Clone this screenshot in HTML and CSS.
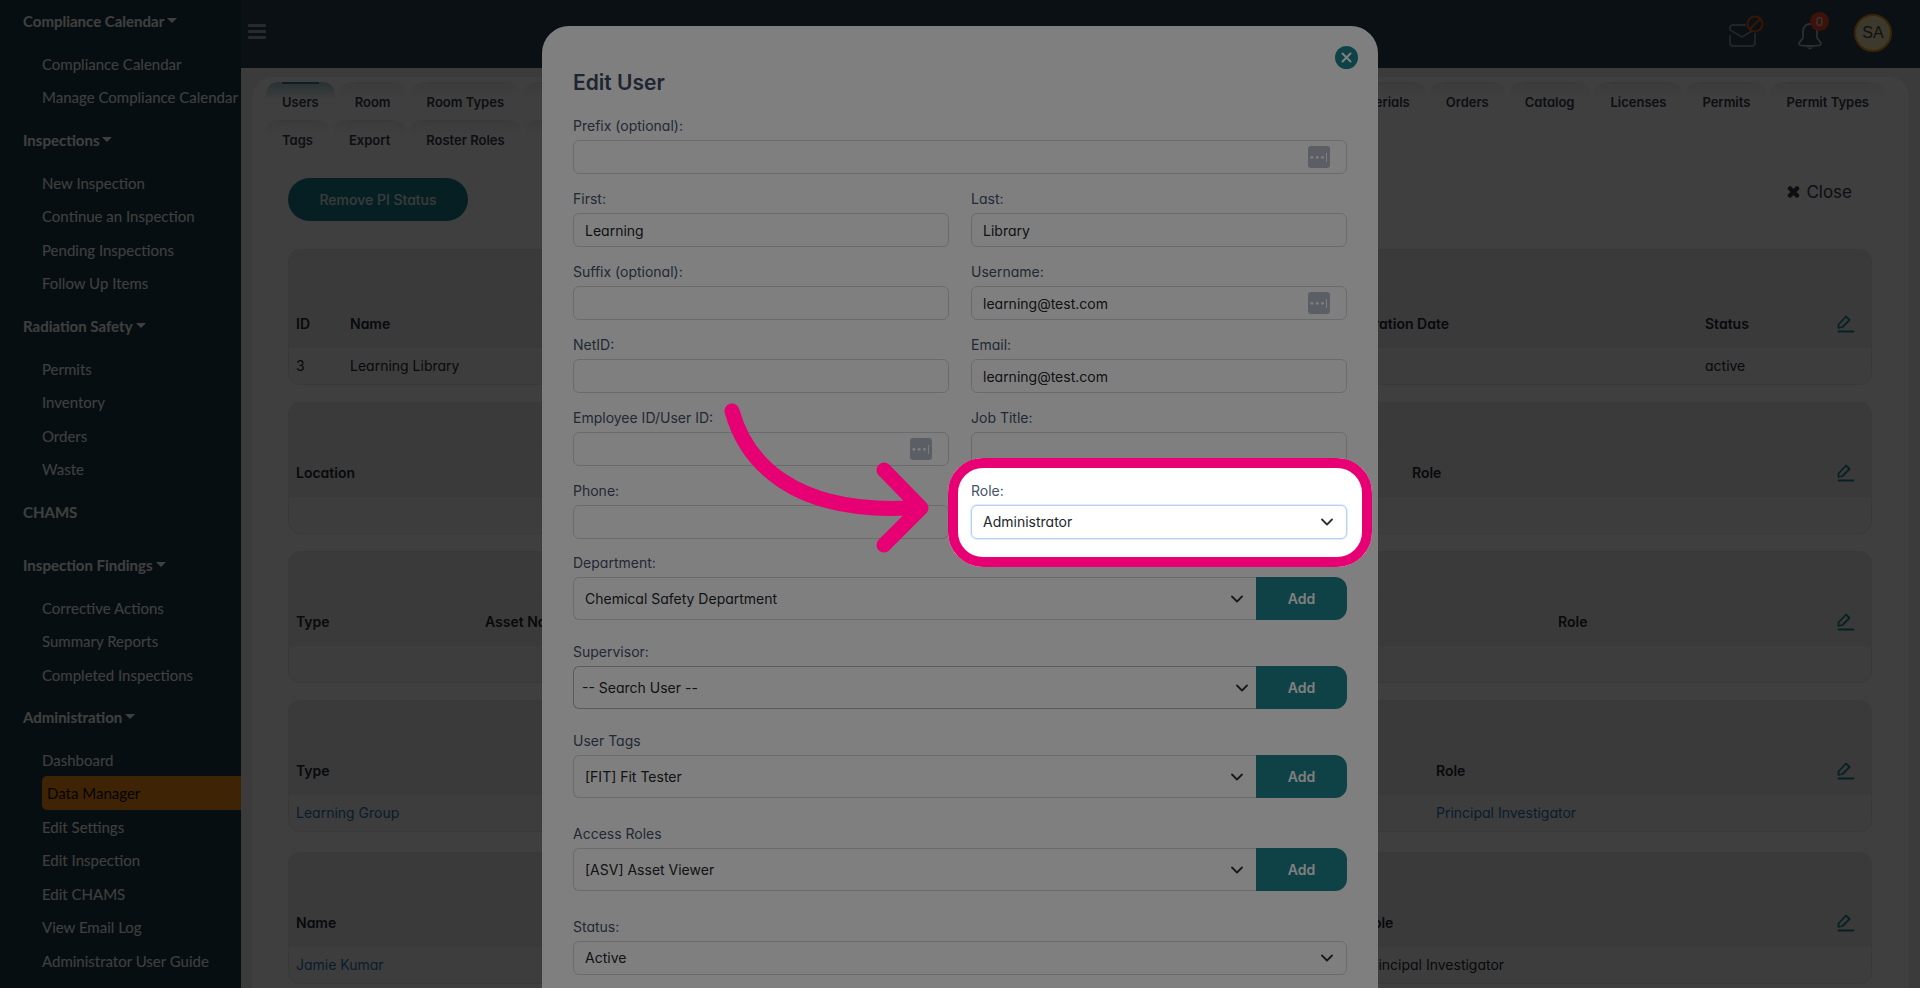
FILE: index.html
```
<!DOCTYPE html>
<html lang="en">
<head>
<meta charset="utf-8">
<meta name="viewport" content="width=device-width, initial-scale=1">
<title>Data Manager - Edit User</title>
<link rel="stylesheet" href="styles.css">
</head>
<body>
<svg class="defs" aria-hidden="true">
  <symbol id="edit" viewBox="0 0 18 18"><path d="M1.500 13V9.500L9 1.500l3.500 3.500-7 7z" fill="none" stroke="currentColor" stroke-width="1.800" stroke-linejoin="round"/><path d="M1.500 16.500h15" stroke="currentColor" stroke-width="1.800" stroke-linecap="round"/></symbol>
  <symbol id="caret" viewBox="0 0 12 8"><path d="M1 1.500l5 5 5-5" fill="none" stroke="currentColor" stroke-width="1.800" stroke-linecap="round" stroke-linejoin="round"/></symbol>
  <symbol id="filler" viewBox="0 0 22 22"><rect width="22" height="22" rx="3" fill="#b6bdc9"/><g fill="#f6f8fa"><circle cx="3.800" cy="11.300" r="1.500"/><circle cx="9.200" cy="11.300" r="1.500"/><circle cx="14.500" cy="11.300" r="1.500"/><rect x="18" y="7" width="1" height="9"/></g></symbol>
</svg>
<div class="app">
  <nav class="sidebar">
    <section class="group"><button class="group-title open">Compliance Calendar</button>
      <ul><li><a href="#">Compliance Calendar</a></li><li><a href="#">Manage Compliance Calendar</a></li></ul></section>
    <section class="group"><button class="group-title open">Inspections</button>
      <ul><li><a href="#">New Inspection</a></li><li><a href="#">Continue an Inspection</a></li><li><a href="#">Pending Inspections</a></li><li><a href="#">Follow Up Items</a></li></ul></section>
    <section class="group"><button class="group-title open">Radiation Safety</button>
      <ul><li><a href="#">Permits</a></li><li><a href="#">Inventory</a></li><li><a href="#">Orders</a></li><li><a href="#">Waste</a></li></ul></section>
    <section class="group single"><button class="group-title">CHAMS</button></section>
    <section class="group"><button class="group-title open">Inspection Findings</button>
      <ul><li><a href="#">Corrective Actions</a></li><li><a href="#">Summary Reports</a></li><li><a href="#">Completed Inspections</a></li></ul></section>
    <section class="group"><button class="group-title open">Administration</button>
      <ul><li><a href="#">Dashboard</a></li><li><a href="#" class="active">Data Manager</a></li><li><a href="#">Edit Settings</a></li><li><a href="#">Edit Inspection</a></li><li><a href="#">Edit CHAMS</a></li><li><a href="#">View Email Log</a></li><li><a href="#">Administrator User Guide</a></li></ul></section>
  </nav>
  <div class="page">
    <header class="topbar">
      <button class="burger" aria-label="Toggle menu"><i></i><i></i><i></i></button>
      <div class="tools">
        <button class="tool mail" aria-label="Mail">
          <svg width="36" height="36" viewBox="0 0 36 36" fill="none" stroke-linecap="round" stroke-linejoin="round"><g stroke="#8b96a0" stroke-width="1.800"><path d="M17 10H5a3 3 0 0 0-3 3v2l12 7 10-6"/><path d="M2 21v7a3 3 0 0 0 3 3h19a3 3 0 0 0 3-3v-9"/></g><g stroke="#d85a14" stroke-width="2"><circle cx="27" cy="9" r="7.500"/><path d="M22 14l10-10"/></g></svg>
        </button>
        <button class="tool bell" aria-label="Notifications">
          <svg width="26" height="28" viewBox="0 0 26 28" fill="none" stroke="#b4bcc4" stroke-width="1.800" stroke-linejoin="round"><path d="M13 2C8 2 6 6 6 10v5c0 3-4 4-4 7 0 2 6 2 11 2s11 0 11-2c0-3-4-4-4-7v-5c0-4-2-8-7-8z"/><path d="M9.500 25.500h7L13 27.500z" fill="#b4bcc4" stroke="none"/></svg>
          <span class="count">0</span>
        </button>
        <button class="avatar">SA</button>
      </div>
    </header>
    <main class="panel">
      <div class="tabs">
        <div class="tabrow"><a href="#" class="tab on">Users</a><a href="#" class="tab">Room</a><a href="#" class="tab">Room Types</a><span class="tab fill"></span><a href="#" class="tab">Materials</a><a href="#" class="tab">Orders</a><a href="#" class="tab">Catalog</a><a href="#" class="tab">Licenses</a><a href="#" class="tab">Permits</a><a href="#" class="tab">Permit Types</a></div>
        <div class="tabrow"><a href="#" class="tab">Tags</a><a href="#" class="tab">Export</a><a href="#" class="tab">Roster Roles</a><span class="tab short"></span></div>
      </div>
      <div class="actions">
        <button class="pill">Remove PI Status</button>
        <button class="close"><svg width="13" height="14" viewBox="0 0 13 14"><path d="M3 3.500l7 7M10 3.500l-7 7" stroke="currentColor" stroke-width="4.500" stroke-linecap="round"/></svg>Close</button>
      </div>
      <div class="box first"><table>
        <colgroup><col class="w-id"><col><col class="w-date"><col class="w-status"><col class="w-edit"></colgroup>
        <thead><tr class="cap"><td colspan="5"></td></tr><tr><th>ID</th><th>Name</th><th>Expiration Date</th><th>Status</th><th><svg class="edit"><use href="#edit"/></svg></th></tr></thead>
        <tbody><tr><td>3</td><td>Learning Library</td><td></td><td>active</td><td></td></tr></tbody></table></div>
      <div class="box"><table>
        <colgroup><col><col class="w-loc-role"><col class="w-edit"></colgroup>
        <thead><tr class="cap"><td colspan="3"></td></tr><tr><th>Location</th><th>Role</th><th><svg class="edit"><use href="#edit"/></svg></th></tr></thead>
        <tbody><tr><td></td><td></td><td></td></tr></tbody></table></div>
      <div class="box"><table>
        <colgroup><col class="w-type"><col><col class="w-asset-role"><col class="w-edit"></colgroup>
        <thead><tr class="cap"><td colspan="4"></td></tr><tr><th>Type</th><th>Asset Name</th><th>Role</th><th><svg class="edit"><use href="#edit"/></svg></th></tr></thead>
        <tbody><tr><td></td><td></td><td></td><td></td></tr></tbody></table></div>
      <div class="box wide"><table>
        <colgroup><col><col class="w-group-role"><col class="w-edit"></colgroup>
        <thead><tr class="cap"><td colspan="3"></td></tr><tr><th>Type</th><th>Role</th><th><svg class="edit"><use href="#edit"/></svg></th></tr></thead>
        <tbody><tr><td><a href="#">Learning Group</a></td><td><a href="#">Principal Investigator</a></td><td></td></tr></tbody></table></div>
      <div class="box"><table>
        <colgroup><col><col class="w-name-role"><col class="w-edit"></colgroup>
        <thead><tr class="cap"><td colspan="3"></td></tr><tr><th>Name</th><th>Role</th><th><svg class="edit"><use href="#edit"/></svg></th></tr></thead>
        <tbody><tr><td><a href="#">Jamie Kumar</a></td><td>Principal Investigator</td><td></td></tr></tbody></table></div>
    </main>
  </div>
</div>

<div class="backdrop">
  <form class="modal" role="dialog" aria-labelledby="title">
    <button type="button" class="dismiss" aria-label="Close dialog"><svg width="11" height="11" viewBox="0 0 11 11"><path d="M1.500 1.500l8 8M9.500 1.500l-8 8" stroke="currentColor" stroke-width="2" stroke-linecap="round"/></svg></button>
    <h1 id="title">Edit User</h1>
    <div class="fields">
      <div class="field full"><label for="prefix">Prefix (optional):</label><div class="ctl"><input id="prefix" type="text"><svg class="filler"><use href="#filler"/></svg></div></div>
      <div class="field"><label for="first">First:</label><input id="first" type="text" value="Learning"></div>
      <div class="field"><label for="last">Last:</label><input id="last" type="text" value="Library"></div>
      <div class="field"><label for="suffix">Suffix (optional):</label><input id="suffix" type="text"></div>
      <div class="field"><label for="user">Username:</label><div class="ctl"><input id="user" type="text" value="learning@test.com"><svg class="filler"><use href="#filler"/></svg></div></div>
      <div class="field"><label for="netid">NetID:</label><input id="netid" type="text"></div>
      <div class="field"><label for="email">Email:</label><input id="email" type="text" value="learning@test.com"></div>
      <div class="field"><label for="emp">Employee ID/User ID:</label><div class="ctl"><input id="emp" type="text"><svg class="filler"><use href="#filler"/></svg></div></div>
      <div class="field"><label for="job">Job Title:</label><input id="job" type="text"></div>
      <div class="field"><label for="phone">Phone:</label><input id="phone" type="text"></div>
      <div class="field role"><label for="role">Role:</label><div class="ctl"><select id="role"><option>Administrator</option></select><svg class="caret"><use href="#caret"/></svg></div>
        <div class="spotlight"></div>
        <svg class="arrow" viewBox="0 0 220 160" aria-hidden="true"><path d="M12 11C26 62 73 114 190 108M164 70l37 38-37 37" fill="none" stroke="#e60073" stroke-width="15" stroke-linecap="round" stroke-linejoin="round"/></svg>
      </div>
    </div>
    <div class="stack">
      <div class="field"><label for="dept">Department:</label><div class="pair"><div class="ctl"><select id="dept"><option>Chemical Safety Department</option></select><svg class="caret"><use href="#caret"/></svg></div><button type="button" class="add">Add</button></div></div>
      <div class="field"><label for="sup">Supervisor:</label><div class="pair"><div class="ctl search"><select id="sup"><option>-- Search User --</option></select><svg class="caret"><use href="#caret"/></svg></div><button type="button" class="add">Add</button></div></div>
      <div class="field loose"><label for="tags">User Tags</label><div class="pair"><div class="ctl"><select id="tags"><option>[FIT] Fit Tester</option></select><svg class="caret"><use href="#caret"/></svg></div><button type="button" class="add">Add</button></div></div>
      <div class="field loose"><label for="access">Access Roles</label><div class="pair"><div class="ctl"><select id="access"><option>[ASV] Asset Viewer</option></select><svg class="caret"><use href="#caret"/></svg></div><button type="button" class="add">Add</button></div></div>
      <div class="field"><label for="status">Status:</label><div class="ctl"><select id="status"><option>Active</option></select><svg class="caret"><use href="#caret"/></svg></div></div>
    </div>
  </form>
</div>
</body>
</html>
```
FILE: styles.css
```
* { box-sizing: border-box; }
body {
  margin: 0;
  height: 100vh;
  overflow: hidden;
  font-family: Inter, "Open Sans", sans-serif;
  font-feature-settings: "cv11";
  font-size: 14px;
  line-height: 20px;
  color: #22282e;
}
button, input, select { font: inherit; font-feature-settings: inherit; color: inherit; }
button { border: 0; background: none; padding: 0; }
a { text-decoration: none; color: inherit; }
.defs { position: absolute; width: 0; height: 0; }

.app { display: flex; height: 100vh; overflow: hidden; }

.sidebar {
  flex: 0 0 241px;
  background: #1c3a44;
  color: #fff;
  font-family: Lato, sans-serif;
  font-size: 15px;
  padding-top: 4px;
}
.group { margin-bottom: 9px; }
.group.single { margin-bottom: 20px; }
.group ul { list-style: none; margin: 10px 0 0; padding: 0 0 0 42px; }
.group-title { display: flex; align-items: center; gap: 3px; height: 33px; padding-left: 23px; font-weight: 700; }
.group-title.open::after { content: ""; border: 5px solid transparent; border-top: 5px solid #fff; border-bottom: 0; }
.group li { height: 33px; display: grid; }
.group li:nth-child(even) { height: 34px; }
.group li a { display: flex; align-items: center; white-space: nowrap; }
.group li a.active { background: #ff8c14; color: #111; padding-left: 5px; border-radius: 5px 0 0 5px; }

.page { flex: 1; min-width: 0; background: #ececec; display: flex; flex-direction: column; }
.topbar { display: flex; flex: 0 0 68px; justify-content: space-between; background: #29404c; padding: 0 28px 0 7px; }
.burger { align-self: flex-start; margin-top: 24px; display: grid; gap: 3px; width: 18px; }
.burger i { height: 3px; border-radius: 1px; background: #a4a8ac; }
.tools { display: flex; align-items: center; height: 65px; }
.tool { position: relative; display: flex; }
.mail { margin-right: 33px; }
.bell { margin: 6px 31px 0 0; }
.count {
  position: absolute;
  left: 13px;
  top: -10px;
  width: 19px;
  height: 19px;
  border-radius: 50%;
  background: #f04a28;
  color: #e8e8e8;
  font-size: 12px;
  line-height: 19px;
  text-align: center;
}
.avatar {
  width: 38px;
  height: 38px;
  border-radius: 50%;
  border: 2px solid #e8961e;
  background: #f4e6b0;
  color: #3a444e;
  font-family: "Liberation Sans", Arial, sans-serif;
  font-size: 16px;
}

.panel { flex: 1; margin: 9px 11px 0; background: #fdfdfd; border-radius: 20px 20px 0 0; padding: 5px 0 0; }
.tabs { display: grid; gap: 4px; padding: 0 24px 0 14px; }
.tabrow { display: flex; gap: 4px; height: 34px; }
.tab {
  position: relative;
  padding: 10px 16px 0;
  border-radius: 12px 12px 0 0;
  background: linear-gradient(#eeeeee, #fdfdfd 15px);
  color: #343c48;
  font-size: 13px;
  font-weight: 600;
  white-space: nowrap;
}
.tab::before { content: ""; position: absolute; top: 0; left: 16px; right: 16px; height: 2px; background: #e0e8e8; }
.tab.on { background: linear-gradient(#a8c8cc, #fdfdfd 18px); }
.tab.on::before { background: #2a8088; }
.tab.fill { flex: 1; }
.tab.short { flex: 0 0 200px; }

.actions { display: flex; justify-content: space-between; align-items: flex-start; padding: 24px 57px 0 36px; }
.pill { height: 43px; min-width: 180px; border-radius: 22px; background: #1a7f8c; color: #e6eef0; font-size: 14px; font-weight: 500; }
.close { display: flex; align-items: center; gap: 6px; height: 28px; font-size: 17px; color: #343e4a; }

.box { margin: 0 37px 17px 36px; border: 1px solid #e6e6ea; border-radius: 12px; overflow: hidden; background: #f7f7f7; }
.box.first { margin-top: 28px; }
.box.wide { margin-bottom: 20px; }
table { width: 100%; table-layout: fixed; border-collapse: collapse; }
thead { background: #eaeaee; }
th, td { padding: 0 7px; text-align: left; height: 36px; white-space: nowrap; }
th { height: 51px; border-top: 1px solid #e4e4e8; font-weight: 600; padding-top: 2px; }
.cap td { height: 43px; }
.first .cap td { height: 47px; }
td a { color: #1f74ba; }
.edit { display: block; width: 18px; height: 18px; color: #1f8088; }
.w-id { width: 54px; }
.w-date { width: 360px; }
.w-status { width: 132px; }
.w-edit { width: 41px; }
.w-loc-role { width: 425px; }
.w-type { width: 189px; }
.w-asset-role { width: 279px; }
.w-group-role { width: 401px; }
.w-name-role { width: 473px; }

.backdrop { position: fixed; inset: 0; overflow: hidden; display: flex; justify-content: center; align-items: flex-start; padding-top: 26px; background: rgba(0, 0, 0, .5); }
.modal { position: relative; width: 836px; max-width: 100%; min-height: 100vh; padding: 43px 31px 0; background: #fff; border-radius: 27px; }
.dismiss { position: absolute; top: 20px; right: 20px; width: 23px; height: 23px; border-radius: 50%; background: #1e848c; color: #fff; display: grid; place-items: center; }
h1 { margin: 0 0 19px; font-size: 21px; line-height: 28px; font-weight: 600; color: #3c4a62; }
.fields { display: grid; grid-template-columns: 1fr 1fr; gap: 15px 22px; }
.full { grid-column: 1 / -1; }
.field { display: grid; gap: 4px; }
label { color: #43536b; height: 20px; }
.ctl { position: relative; display: grid; }
input, select { width: 100%; height: 34px; border: 1px solid #d4d7db; border-radius: 6px; padding: 0 11px; background: #fff; color: #22262a; outline: 0; }
select { appearance: none; }
.caret { position: absolute; right: 14px; top: calc(50% - 4px); width: 12px; height: 8px; color: #2c3136; pointer-events: none; }
.filler { position: absolute; right: 17px; top: 6px; width: 22px; height: 22px; }
.stack { display: grid; gap: 22px; padding-top: 14px; }
.loose { margin-bottom: 4px; }
.pair { display: grid; grid-template-columns: 1fr 91px; }
.pair select { height: 43px; border-radius: 6px 0 0 6px; border-right: 0; }
.pair .caret { right: 13px; }
.pair .search select { border-color: #b4b6b8; padding-left: 8px; }
.pair .search .caret { right: 8px; }
.add { background: #1e848c; color: #fff; font-weight: 600; border-radius: 0 12px 12px 0; }

.role { position: relative; }
.role select { border-color: #b9cff2; box-shadow: 0 0 0 1px #e3ecfb; }
.spotlight {
  position: absolute;
  z-index: 5;
  inset: -23px -25px -28px -23px;
  border: 10px solid #e60073;
  border-radius: 35px;
  box-shadow: 0 0 0 3000px rgba(0, 0, 0, .5);
  pointer-events: none;
}
.arrow { position: absolute; z-index: 6; left: -251px; top: -81px; width: 220px; height: 160px; pointer-events: none; }
```
